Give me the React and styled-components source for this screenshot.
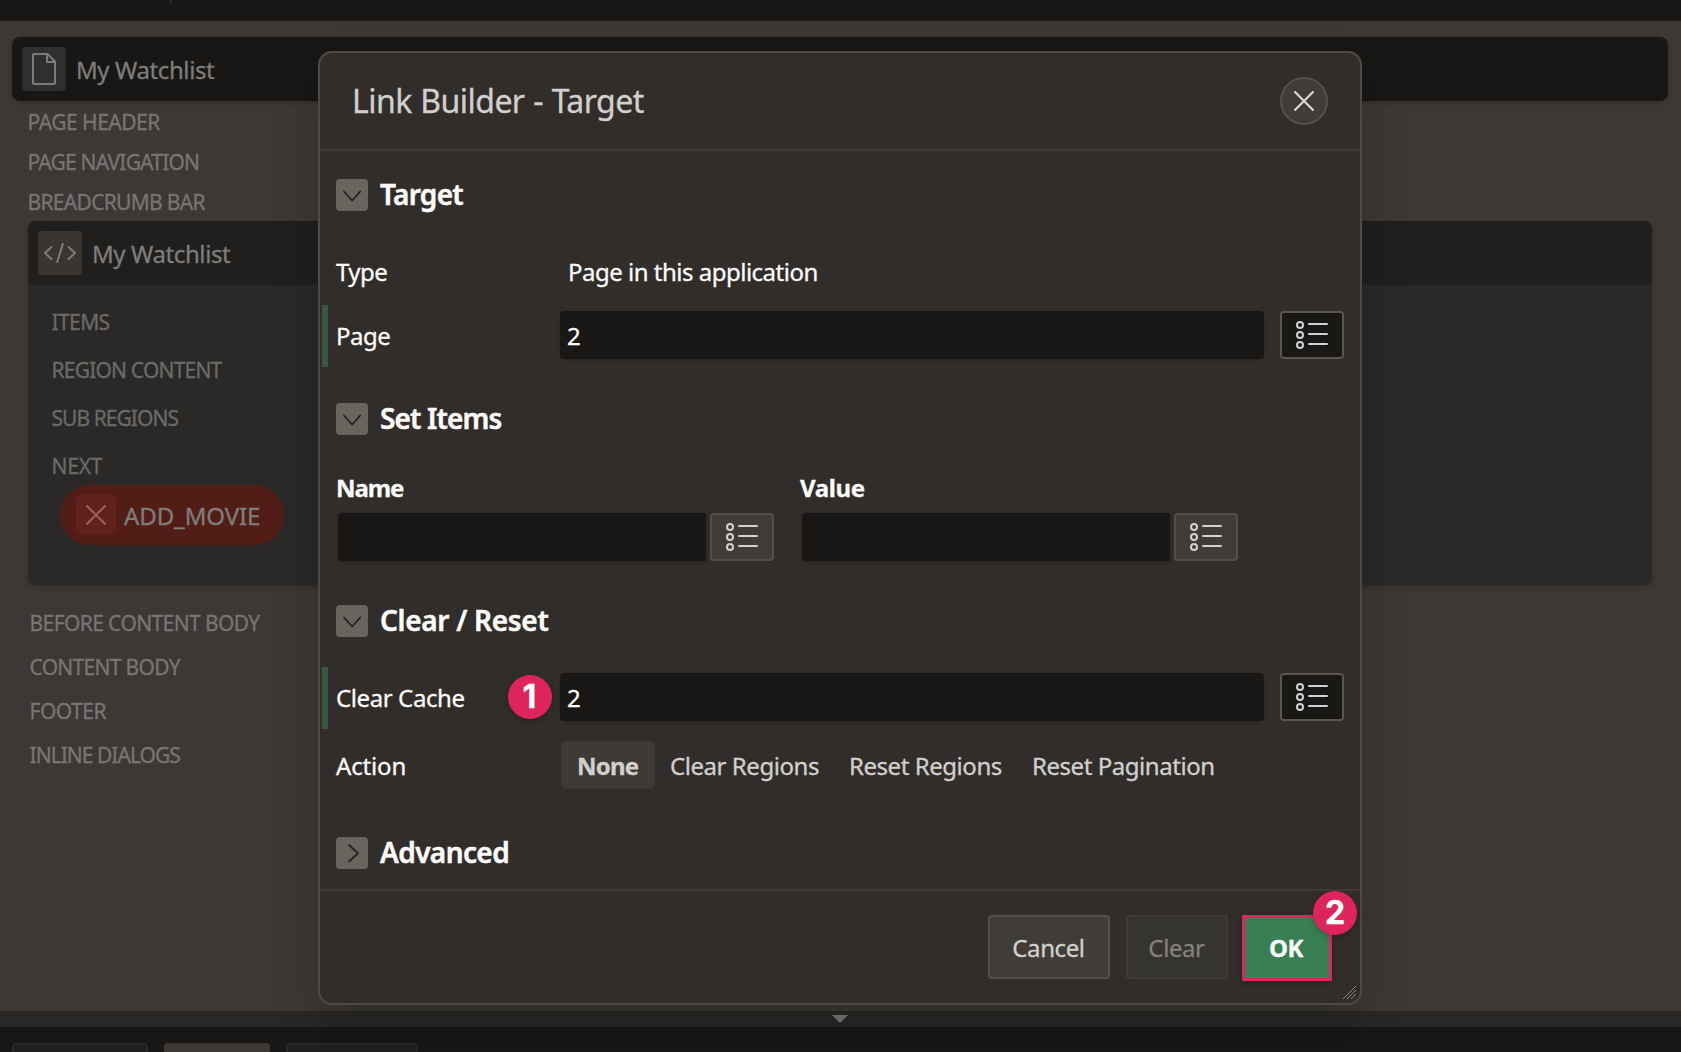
import React from "react";
import styled, { createGlobalStyle } from "styled-components";

const Global = createGlobalStyle`
  * { box-sizing: border-box; }
  body {
    margin: 0;
    background: #3d3835;
    font-family: "Noto Sans", "Open Sans", sans-serif;
    -webkit-text-stroke: 0.3px currentColor;
    overflow: hidden;
  }
  button, input { font-family: inherit; }
`;

const Page = styled.div`
  position: relative;
  width: 1681px;
  height: 1052px;
  display: flex;
  flex-direction: column;
  overflow: hidden;
`;

const TopBar = styled.div`
  height: 21px;
  flex: none;
  background: #181715;
  padding-left: 170px;
`;

const TopTick = styled.div`
  width: 2px;
  height: 3px;
  background: #2c2b29;
`;

const Canvas = styled.div`
  flex: 1;
  padding: 16px 13px 0 12px;
`;

const PageBar = styled.div`
  height: 64px;
  display: flex;
  align-items: center;
  gap: 10px;
  padding-left: 10px;
  background: #181715;
  border-radius: 8px;
  box-shadow: 0 2px 4px rgba(0, 0, 0, 0.16);
`;

const RegionBar = styled(PageBar)`
  background: #201f1d;
  border-radius: 8px 8px 0 0;
  box-shadow: none;
`;

const IconTile = styled.span`
  width: 44px;
  height: 44px;
  border-radius: 4px;
  background: ${(p) => p.$bg};
  display: grid;
  place-items: center;
`;

const BarTitle = styled.span`
  padding-top: 2px;
  font-size: 24px;
  line-height: 32px;
  letter-spacing: ${(p) => p.$ls || "-0.4px"};
  color: #7e7d7b;
`;

const Slots = styled.div`
  display: flex;
  flex-direction: column;
  padding: ${(p) => p.$top || 0}px 0 0 ${(p) => p.$indent}px;
`;

const Slot = styled.div`
  height: ${(p) => p.$pitch}px;
  line-height: ${(p) => p.$pitch + (p.$drop || 0)}px;
  font-size: 21px;
  letter-spacing: ${(p) => p.$ls || "-0.7px"};
  color: ${(p) => p.$color || "#777573"};
  white-space: nowrap;
`;

const Region = styled.div`
  height: 364px;
  margin: 0 16px;
  border-radius: 8px;
  background: #2a2927;
  box-shadow: 0 2px 4px rgba(0, 0, 0, 0.18);
`;

const Pill = styled.div`
  width: 224px;
  height: 60px;
  margin: -4px 0 0 32px;
  border-radius: 30px;
  background: #521d17;
  display: flex;
  align-items: center;
  gap: 8px;
  padding-left: 16px;
`;

const PillIcon = styled.span`
  width: 40px;
  height: 40px;
  border-radius: 4px;
  background: #61211b;
  display: grid;
  place-items: center;
`;

const Splitter = styled.div`
  height: 16px;
  flex: none;
  background: #292826;
  display: flex;
  justify-content: center;
  padding: 4px 1px 0 0;
`;

const BottomPanel = styled.div`
  height: 25px;
  flex: none;
  background: #181715;
  display: flex;
  gap: 16px;
  padding: 16px 0 0 12px;
`;

const BottomTab = styled.div`
  width: ${(p) => p.$w}px;
  height: 30px;
  border-radius: 4px;
  border: 2px solid ${(p) => (p.$active ? "#3d3835" : "#2a2927")};
  background: ${(p) => (p.$active ? "#3d3835" : "#201f1d")};
`;

const Dialog = styled.section`
  position: absolute;
  left: 318px;
  top: 51px;
  width: 1044px;
  height: 954px;
  display: flex;
  flex-direction: column;
  border: 2px solid #4f4a44;
  border-radius: 14px;
  background: #312d2a;
  box-shadow: 0 24px 48px rgba(0, 0, 0, 0.2);
`;

const DialogHeader = styled.header`
  height: 98px;
  flex: none;
  border-bottom: 2px solid #3f3b37;
  display: flex;
  align-items: center;
  justify-content: space-between;
  padding: 0 32px;
`;

const DialogTitle = styled.h1`
  margin: 0;
  font-size: 32px;
  font-weight: 400;
  line-height: 40px;
  letter-spacing: -0.55px;
  word-spacing: 0.9px;
  color: #d1d0ce;
`;

const CloseButton = styled.button`
  width: 48px;
  height: 48px;
  padding: 0;
  border-radius: 50%;
  border: 2px solid #54514a;
  background: #403c37;
  display: grid;
  place-items: center;
`;

const DialogBody = styled.div`
  height: 740px;
  flex: none;
  border-bottom: 2px solid #3f3b37;
  padding-top: 28px;
`;

const SectionHead = styled.div`
  display: flex;
  align-items: flex-start;
  gap: 12px;
  height: 32px;
  padding-left: 16px;
  margin-bottom: ${(p) => p.$after || 0}px;
`;

const Toggle = styled.span`
  width: 32px;
  height: 32px;
  border-radius: 4px;
  background: #69655e;
  display: grid;
  place-items: center;
`;

const SectionTitle = styled.h2`
  margin: 0;
  font-size: 28px;
  line-height: 30px;
  font-weight: 600;
  letter-spacing: ${(p) => p.$ls || "-0.6px"};
  -webkit-text-stroke-width: 0.5px;
  color: #fcfbfa;
`;

const Row = styled.div`
  display: grid;
  grid-template-columns: 208px 704px 64px;
  column-gap: 16px;
  height: ${(p) => p.$h || 62}px;
  margin: 0 0 ${(p) => p.$after || 0}px 2px;
  padding: ${(p) => p.$top || 0}px 0 0 8px;
  border-left: 6px solid ${(p) => (p.$changed ? "#38573f" : "transparent")};
`;

const Label = styled.span`
  font-size: 24px;
  line-height: 50px;
  letter-spacing: ${(p) => p.$ls || "-0.5px"};
  color: #fcfbfa;
  white-space: nowrap;
`;

const Value = styled(Label)`
  padding-left: 8px;
`;

const Field = styled.div`
  height: 48px;
  width: ${(p) => p.$w || 704}px;
  padding-left: 7px;
  border-radius: ${(p) => (p.$joined ? "4px 0 0 4px" : "4px")};
  background: #191816;
  box-shadow: 0 1px 3px rgba(0, 0, 0, 0.2);
  color: #fcfbfa;
  font-size: 24px;
  line-height: 50px;
`;

const ListButton = styled.button`
  width: 64px;
  height: 48px;
  padding: 0;
  border-radius: 4px;
  border: 2px solid ${(p) => (p.$raised ? "#524f48" : "#5a564e")};
  background: ${(p) => (p.$raised ? "#403c37" : "#191816")};
  display: grid;
  place-items: center;
`;

const Pairs = styled.div`
  display: flex;
  gap: 28px;
  padding-left: 18px;
  margin-bottom: 44px;
`;

const Pair = styled.div`
  display: grid;
  grid-template-columns: 368px 64px;
  column-gap: 4px;
`;

const PairLabel = styled.span`
  grid-column: 1 / -1;
  height: 41px;
  margin-left: -2px;
  font-size: 24px;
  line-height: 32px;
  font-weight: 700;
  letter-spacing: ${(p) => p.$ls};
  color: #fcfbfa;
`;

const Choices = styled.div`
  display: flex;
  align-items: flex-start;
  padding-left: 1px;
`;

const Choice = styled.span`
  flex: none;
  width: ${(p) => p.$w}px;
  height: 48px;
  padding-left: 15px;
  border: ${(p) => (p.$on ? "1px solid #393531" : "0")};
  border-radius: 4px;
  background: ${(p) => (p.$on ? "#3e3a36" : "transparent")};
  font-size: 24px;
  line-height: ${(p) => (p.$on ? 48 : 50)}px;
  font-weight: ${(p) => (p.$on ? 700 : 400)};
  letter-spacing: ${(p) => p.$ls || "-0.45px"};
  color: #d1d0ce;
  white-space: nowrap;
`;

const DialogFooter = styled.footer`
  position: relative;
  flex: 1;
  display: flex;
  align-items: flex-start;
  justify-content: flex-end;
  padding: 24px 28px 0 0;
`;

const FooterButton = styled.button`
  width: ${(p) => p.$w}px;
  height: 64px;
  margin-right: ${(p) => p.$gap}px;
  padding: 2px 1px 0 0;
  border-radius: 4px;
  border: 2px solid ${(p) => (p.$off ? "#3f3c38" : "#54514a")};
  background: ${(p) => (p.$off ? "#363430" : "#403c37")};
  color: ${(p) => (p.$off ? "#83817e" : "#d1d0ce")};
  font-size: 24px;
  line-height: 58px;
  letter-spacing: -0.4px;
`;

const OkButton = styled.button`
  width: 90px;
  height: 66px;
  padding: 0 2px 0 0;
  border: 3px solid #e0245c;
  border-radius: 1px;
  background: #397f54;
  color: #fff;
  font-size: 24px;
  line-height: 58px;
  font-weight: 700;
  letter-spacing: -0.5px;
  box-shadow: 0 2px 6px rgba(0, 0, 0, 0.25);
`;

const Marker = styled.span`
  position: absolute;
  left: ${(p) => p.$x}px;
  top: ${(p) => p.$y}px;
  width: 44px;
  height: 44px;
  border-radius: 50%;
  background: #de255b;
  color: #fff;
  font-family: Inter, sans-serif;
  font-size: 32px;
  line-height: 44px;
  font-weight: 700;
  text-align: center;
  box-shadow: 0 2px 6px rgba(0, 0, 0, 0.25);
`;

const Grip = styled.svg`
  position: absolute;
  right: 3px;
  bottom: 3px;
`;

const Cross = ({ color }) => (
  <svg width="20" height="20" viewBox="0 0 20 20" fill="none" stroke={color} strokeWidth="2" strokeLinecap="round">
    <path d="M1 1 19 19M19 1 1 19" />
  </svg>
);

const DocIcon = () => (
  <svg width="24" height="32" viewBox="0 0 24 32" fill="none" stroke="#7e7d7b" strokeWidth="2" strokeLinejoin="round">
    <path d="M2 1H15.500L23 8.500V30a1 1 0 0 1-1 1H2a1 1 0 0 1-1-1V2a1 1 0 0 1 1-1ZM15 1V9H23" />
  </svg>
);

const CodeIcon = () => (
  <svg width="32" height="20" viewBox="0 0 32 20" fill="none" stroke="#7e7d7b" strokeWidth="2" strokeLinecap="round" strokeLinejoin="round">
    <path d="M7.500 4 1 10l6.500 6M24.500 4 31 10l-6.500 6M18.800 1 13.200 19" />
  </svg>
);

const ChevronIcon = ({ right }) => (
  <svg width="20" height="20" viewBox="0 0 20 20" fill="none" stroke="#23211f" strokeWidth="1.800" strokeLinecap="round" strokeLinejoin="round">
    <path d={right ? "M7 2l9 8.300-9 8.200" : "M2 6.500l8.200 9 8-9"} />
  </svg>
);

const ListIcon = () => (
  <svg width="32" height="28" viewBox="0 0 32 28" fill="none" stroke="#d1d0ce" strokeWidth="2">
    <circle cx="4" cy="4" r="3" />
    <circle cx="4" cy="14" r="3" />
    <circle cx="4" cy="24" r="3" />
    <path d="M13 3H31M13 13H31M13 23H31" strokeLinecap="round" />
  </svg>
);

const Section = ({ title, right, after, ls }) => (
  <SectionHead $after={after}>
    <Toggle>
      <ChevronIcon right={right} />
    </Toggle>
    <SectionTitle $ls={ls}>{title}</SectionTitle>
  </SectionHead>
);

const ItemPair = ({ title, ls }) => (
  <Pair>
    <PairLabel $ls={ls}>{title}</PairLabel>
    <Field $w={368} $joined />
    <ListButton $raised>
      <ListIcon />
    </ListButton>
  </Pair>
);

const pageSlots = [
  ["PAGE HEADER", "-0.5px"],
  ["PAGE NAVIGATION", "-0.8px"],
  ["BREADCRUMB BAR", "-0.7px"],
];

const regionSlots = [
  ["ITEMS", "-0.6px"],
  ["REGION CONTENT", "-0.8px"],
  ["SUB REGIONS", "-0.95px"],
  ["NEXT", "-0.2px"],
];

const lowerSlots = [
  ["BEFORE CONTENT BODY", "-0.6px"],
  ["CONTENT BODY", "-0.7px"],
  ["FOOTER", "-0.5px"],
  ["INLINE DIALOGS", "-0.97px"],
];

const SlotList = ({ items, indent, top, pitch, drop, color }) => (
  <Slots $indent={indent} $top={top}>
    {items.map(([name, ls]) => (
      <Slot key={name} $pitch={pitch} $drop={drop} $ls={ls} $color={color}>
        {name}
      </Slot>
    ))}
  </Slots>
);

export default function App() {
  return (
    <Page>
      <Global />
      <TopBar>
        <TopTick />
      </TopBar>
      <Canvas>
        <PageBar>
          <IconTile $bg="#302f2d">
            <DocIcon />
          </IconTile>
          <BarTitle>My Watchlist</BarTitle>
        </PageBar>
        <SlotList items={pageSlots} indent={15.500} pitch={40} drop={2} />
        <Region>
          <RegionBar>
            <IconTile $bg="#393532">
              <CodeIcon />
            </IconTile>
            <BarTitle>My Watchlist</BarTitle>
          </RegionBar>
          <SlotList items={regionSlots} indent={23.500} top={12} pitch={48} drop={2} color="#6b6a68" />
          <Pill>
            <PillIcon>
              <Cross color="#96645f" />
            </PillIcon>
            <BarTitle $ls="-0.1px">ADD_MOVIE</BarTitle>
          </Pill>
        </Region>
        <SlotList items={lowerSlots} indent={17.500} top={16} pitch={44} />
      </Canvas>
      <Splitter>
        <svg width="16" height="8" viewBox="0 0 16 8">
          <path d="M0 0H16L8 8Z" fill="#7b7a78" />
        </svg>
      </Splitter>
      <BottomPanel>
        <BottomTab $w={136} />
        <BottomTab $w={106} $active />
        <BottomTab $w={132} />
      </BottomPanel>

      <Dialog>
        <DialogHeader>
          <DialogTitle>Link Builder - Target</DialogTitle>
          <CloseButton>
            <Cross color="#dddcda" />
          </CloseButton>
        </DialogHeader>
        <DialogBody>
          <Section title="Target" after={31} ls="-0.7px" />
          <Row $h={63} $top={5}>
            <Label>Type</Label>
            <Value>Page in this application</Value>
          </Row>
          <Row $changed $top={6} $after={36}>
            <Label>Page</Label>
            <Field>2</Field>
            <ListButton>
              <ListIcon />
            </ListButton>
          </Row>

          <Section title="Set Items" after={37} ls="-0.85px" />
          <Pairs>
            <ItemPair title="Name" ls="-1.1px" />
            <ItemPair title="Value" ls="-0.4px" />
          </Pairs>

          <Section title="Clear / Reset" after={30} ls="-0.3px" />
          <Row $changed $top={6} $after={12}>
            <Label $ls="-0.4px">Clear Cache</Label>
            <Field>2</Field>
            <ListButton>
              <ListIcon />
            </ListButton>
          </Row>
          <Row $h={48} $after={48}>
            <Label $ls="-0.15px">Action</Label>
            <Choices>
              <Choice $on $w={94} $ls="-0.8px">None</Choice>
              <Choice $w={179}>Clear Regions</Choice>
              <Choice $w={183}>Reset Regions</Choice>
              <Choice $w={190}>Reset Pagination</Choice>
            </Choices>
          </Row>

          <Section title="Advanced" right />
        </DialogBody>
        <DialogFooter>
          <FooterButton $w={122} $gap={16}>Cancel</FooterButton>
          <FooterButton $w={102} $gap={14} $off>Clear</FooterButton>
          <OkButton>OK</OkButton>
          <Marker $x={993} $y={0}>2</Marker>
          <Grip width="15" height="15" viewBox="0 0 15 15" fill="none" stroke="#8a8783" strokeWidth="1">
            <path d="M1 14 14 1M5 14 14 5M9 14 14 9" />
          </Grip>
        </DialogFooter>
        <Marker $x={187.500} $y={622}>1</Marker>
      </Dialog>
    </Page>
  );
}
